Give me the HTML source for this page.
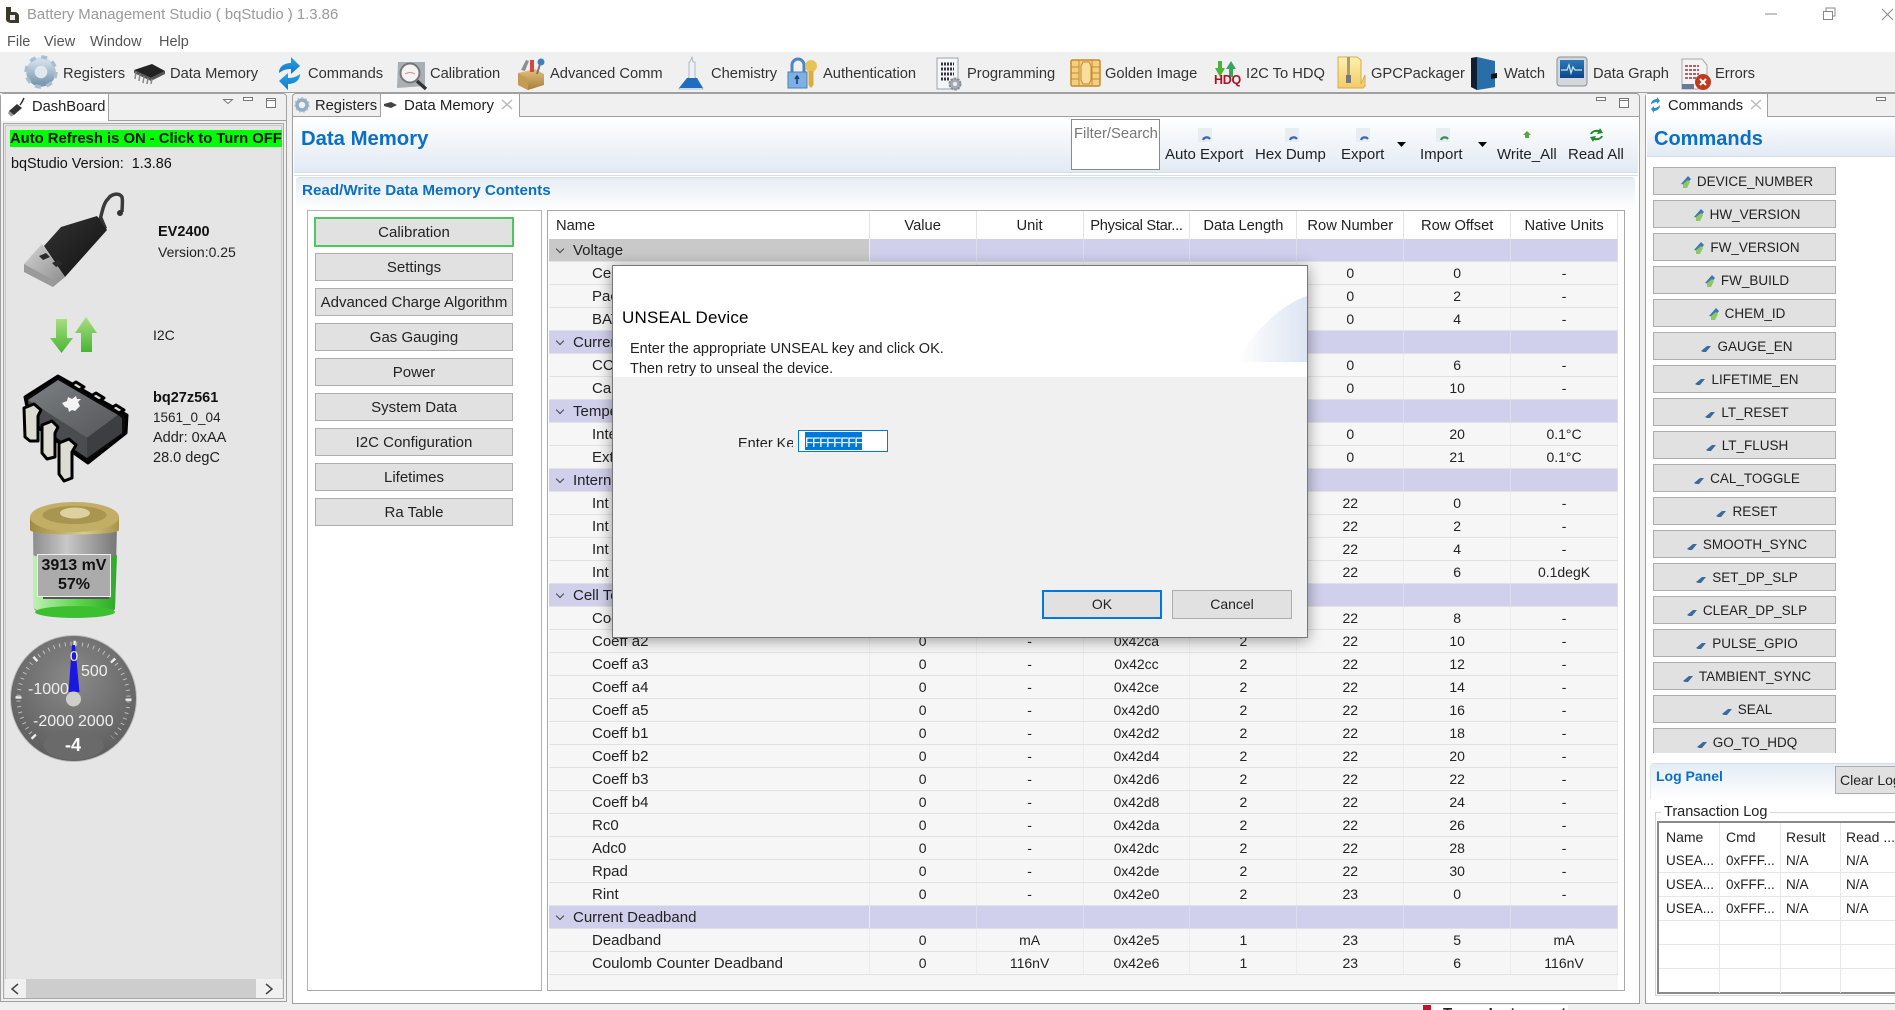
<!DOCTYPE html>
<html><head><meta charset="utf-8"><title>Battery Management Studio</title>
<style>
html,body{margin:0;padding:0;width:1895px;height:1010px;overflow:hidden;background:#f0f0f0;font-family:"Liberation Sans",sans-serif;font-size:14px;color:#222}
div,span{box-sizing:border-box}
.a{position:absolute}
.t{position:absolute;white-space:nowrap;line-height:20px;height:20px}
.tb{font-size:14.7px;color:#333;top:64px}
.ft{font-size:15px;top:145px}
.hb{color:#0b6fc5;font-weight:bold}
.btn{position:absolute;background:#e1e1e1;border:1px solid #adadad;text-align:center;color:#222;font-size:14px;white-space:nowrap;overflow:hidden}
.lb{left:315px;width:198px;height:28px;line-height:28px;font-size:15px}
.cb{left:1653px;width:183px;height:28px;line-height:28px;font-size:13.5px;padding-left:4px}
.cb svg{vertical-align:-3px;margin-right:5px}
.r{display:flex;height:23px;background:#f6f6f6;border-bottom:1px solid #e2e2e2;line-height:22px;font-size:14px;color:#222}
.r span{width:107px;text-align:center;border-right:1px solid #ececec;height:22px}
.r span:first-child{width:321px;text-align:left;padding-left:43px;border-right:1px solid #ececec;white-space:nowrap;overflow:hidden;font-size:15px;line-height:24px}
.g{background:#d0d0ec}
.g span{border-right:1px solid #dcdcf0}
.g span:first-child{padding-left:24px;position:relative}
.g span:first-child:before{content:"";position:absolute;left:8px;top:7px;width:5px;height:5px;border-right:1.4px solid #444;border-bottom:1.4px solid #444;transform:rotate(45deg)}
.h{display:flex;height:28px;line-height:31px;background:#fff;font-size:14.7px}
.h span{width:107px;text-align:center;border-right:1px solid #e4e4e4;height:28px;white-space:nowrap}
.h span:first-child{width:321px;text-align:left;padding-left:7px}
.lr{position:absolute;left:1659px;width:240px;height:24px;border-bottom:1px solid #e6e6e6;font-size:13.5px;line-height:24px;color:#222}
.lr b{font-weight:normal;position:absolute;top:0}
.lc{position:absolute;top:823px;height:170px;width:1px;background:#e8e8e8}
.d{font-size:14.5px}
.ds{font-size:16px;color:#eee}
</style></head><body>

<div class="a" style="left:0;top:0;width:1895px;height:52px;background:#fff"></div>
<div class="a" style="left:0;top:52px;width:1895px;height:41px;background:#f0f0f0;border-bottom:1px solid #a0a0a0"></div>

<div class="t" style="left:27px;top:5px;font-size:14.9px;color:#999">Battery Management Studio ( bqStudio ) 1.3.86</div>
<div class="t" style="left:7px;top:32px;font-size:14.5px;color:#555">File</div>
<div class="t" style="left:44px;top:32px;font-size:14.5px;color:#555">View</div>
<div class="t" style="left:90px;top:32px;font-size:14.5px;color:#555">Window</div>
<div class="t" style="left:159px;top:32px;font-size:14.5px;color:#555">Help</div>

<div class="t tb" style="left:63px">Registers</div>
<div class="t tb" style="left:170px">Data Memory</div>
<div class="t tb" style="left:308px">Commands</div>
<div class="t tb" style="left:430px">Calibration</div>
<div class="t tb" style="left:550px">Advanced Comm</div>
<div class="t tb" style="left:711px">Chemistry</div>
<div class="t tb" style="left:823px">Authentication</div>
<div class="t tb" style="left:967px">Programming</div>
<div class="t tb" style="left:1105px">Golden Image</div>
<div class="t tb" style="left:1246px">I2C To HDQ</div>
<div class="t tb" style="left:1371px">GPCPackager</div>
<div class="t tb" style="left:1504px">Watch</div>
<div class="t tb" style="left:1593px">Data Graph</div>
<div class="t tb" style="left:1715px">Errors</div>

<!-- Dashboard panel -->
<div class="a" style="left:0;top:93px;width:287px;height:909px;border:1px solid #a0a0a0;border-radius:4px 4px 0 0;background:#f0f0f0"></div>
<div class="a" style="left:1px;top:94px;width:108px;height:27px;background:#fff;border-right:1px solid #a0a0a0;border-bottom:0"></div>
<div class="a" style="left:109px;top:120px;width:177px;height:1px;background:#a0a0a0"></div>
<div class="t" style="left:32px;top:97px;font-size:14.7px;color:#222">DashBoard</div>
<div class="a" style="left:3px;top:123px;width:281px;height:876px;background:#e5e5e5;border:1px solid #a8a8a8;outline:1px solid #c8c8c8;outline-offset:-3px"></div>
<div class="a" style="left:10px;top:130px;width:272px;height:17px;background:#00ff00"></div>
<div class="t" style="left:10px;top:129px;font-size:14.8px;font-weight:bold;color:#111">Auto Refresh is ON - Click to Turn OFF</div>
<div class="t" style="left:11px;top:154px;font-size:14.4px;color:#111">bqStudio Version:&nbsp; 1.3.86</div>
<div class="t" style="left:158px;top:222px;font-size:14.5px;font-weight:bold;color:#111">EV2400</div>
<div class="t" style="left:158px;top:242px;font-size:14px;color:#222">Version:0.25</div>
<div class="t" style="left:153px;top:325px;font-size:14px;color:#222">I2C</div>
<div class="t" style="left:153px;top:388px;font-size:14.5px;font-weight:bold;color:#111">bq27z561</div>
<div class="t" style="left:153px;top:408px;font-size:13.5px;color:#222">1561_0_04</div>
<div class="t" style="left:153px;top:428px;font-size:14.5px;color:#222">Addr: 0xAA</div>
<div class="t" style="left:153px;top:448px;font-size:14.5px;color:#222">28.0 degC</div>
<div class="a" style="left:5px;top:979px;width:277px;height:19px;background:#f0f0f0"></div>
<div class="a" style="left:26px;top:979px;width:230px;height:19px;background:#cdcdcd"></div>

<!-- Data Memory panel -->
<div class="a" style="left:292px;top:93px;width:1348px;height:911px;border:1px solid #a0a0a0;border-radius:4px 4px 0 0;background:#f0f0f0"></div>
<div class="a" style="left:293px;top:116px;width:1346px;height:887px;background:#fff;border-top:1px solid #a0a0a0"></div>
<div class="a" style="left:380px;top:94px;width:140px;height:24px;background:#fff;border-left:1px solid #a0a0a0;border-right:1px solid #a0a0a0"></div>
<div class="t" style="left:315px;top:96px;font-size:14.7px">Registers</div>
<div class="t" style="left:404px;top:96px;font-size:15px">Data Memory</div>
<div class="a" style="left:294px;top:117px;width:1344px;height:55px;background:linear-gradient(#fff,#e2eaf3)"></div>
<div class="a" style="left:294px;top:172px;width:1344px;height:4px;border-top:1px solid #d4dde8;border-bottom:1px solid #d4dde8"></div>
<div class="t hb" style="left:301px;top:129px;font-size:20.3px">Data Memory</div>
<div class="a" style="left:296px;top:177px;width:1339px;height:34px;background:linear-gradient(#e6edf5,#fff);border-radius:4px 4px 0 0;border-top:1px solid #d5dee8"></div>
<div class="t hb" style="left:302px;top:181px;font-size:15.2px">Read/Write Data Memory Contents</div>

<div class="a" style="left:1071px;top:119px;width:89px;height:51px;background:#fff;border:1px solid #8a8a8a"></div>
<div class="t" style="left:1074px;top:124px;font-size:14.8px;color:#777">Filter/Search</div>
<div class="t ft" style="left:1165px">Auto Export</div>
<div class="t ft" style="left:1255px">Hex Dump</div>
<div class="t ft" style="left:1341px">Export</div>
<div class="t ft" style="left:1420px">Import</div>
<div class="t ft" style="left:1497px">Write_All</div>
<div class="t ft" style="left:1568px">Read All</div>

<!-- Left button list -->
<div class="a" style="left:307px;top:210px;width:235px;height:781px;border:1px solid #b4b4b4;border-bottom:1px solid #a8a8a8;background:#fff"></div>
<div class="btn lb" style="left:314px;width:200px;top:217px;height:30px;border:2px solid #4ec85a;line-height:28px">Calibration</div>
<div class="btn lb" style="top:253px">Settings</div>
<div class="btn lb" style="top:288px">Advanced Charge Algorithm</div>
<div class="btn lb" style="top:323px">Gas Gauging</div>
<div class="btn lb" style="top:358px">Power</div>
<div class="btn lb" style="top:393px">System Data</div>
<div class="btn lb" style="top:428px">I2C Configuration</div>
<div class="btn lb" style="top:463px">Lifetimes</div>
<div class="btn lb" style="top:498px">Ra Table</div>

<!-- Table -->
<div class="a" style="left:547px;top:210px;width:1078px;height:781px;border:1px solid #a8a8a8;background:#fff"></div>
<div class="a" style="left:549px;top:211px;width:1069px;height:779px;background:#f6f6f6;overflow:hidden">
<div class="h"><span>Name</span><span>Value</span><span>Unit</span><span style="letter-spacing:-.3px">Physical Star...</span><span>Data Length</span><span>Row Number</span><span>Row Offset</span><span>Native Units</span></div>
<div class="r g"><span style="background:#c9c9c9">Voltage</span><span></span><span></span><span></span><span></span><span></span><span></span><span></span></div>
<div class="r"><span>Cell Gain</span><span>0</span><span>-</span><span>0x4000</span><span>2</span><span>0</span><span>0</span><span>-</span></div>
<div class="r"><span>Pack Gain</span><span>0</span><span>-</span><span>0x4002</span><span>2</span><span>0</span><span>2</span><span>-</span></div>
<div class="r"><span>BAT Gain</span><span>0</span><span>-</span><span>0x4004</span><span>2</span><span>0</span><span>4</span><span>-</span></div>
<div class="r g"><span>Current</span><span></span><span></span><span></span><span></span><span></span><span></span><span></span></div>
<div class="r"><span>CC Gain</span><span>0</span><span>-</span><span>0x4006</span><span>4</span><span>0</span><span>6</span><span>-</span></div>
<div class="r"><span>Capacity Gain</span><span>0</span><span>-</span><span>0x400a</span><span>4</span><span>0</span><span>10</span><span>-</span></div>
<div class="r g"><span>Temperature</span><span></span><span></span><span></span><span></span><span></span><span></span><span></span></div>
<div class="r"><span>Internal Temp Offset</span><span>0</span><span>-</span><span>0x4014</span><span>1</span><span>0</span><span>20</span><span>0.1°C</span></div>
<div class="r"><span>External Temp Offset</span><span>0</span><span>-</span><span>0x4015</span><span>1</span><span>0</span><span>21</span><span>0.1°C</span></div>
<div class="r g"><span>Internal Temp Model</span><span></span><span></span><span></span><span></span><span></span><span></span><span></span></div>
<div class="r"><span>Int Coeff 1</span><span>0</span><span>-</span><span>0x42c0</span><span>2</span><span>22</span><span>0</span><span>-</span></div>
<div class="r"><span>Int Coeff 2</span><span>0</span><span>-</span><span>0x42c2</span><span>2</span><span>22</span><span>2</span><span>-</span></div>
<div class="r"><span>Int Coeff 3</span><span>0</span><span>-</span><span>0x42c4</span><span>2</span><span>22</span><span>4</span><span>-</span></div>
<div class="r"><span>Int Coeff 4</span><span>0</span><span>-</span><span>0x42c6</span><span>2</span><span>22</span><span>6</span><span>0.1degK</span></div>
<div class="r g"><span>Cell Temperature Model</span><span></span><span></span><span></span><span></span><span></span><span></span><span></span></div>
<div class="r"><span>Coeff a1</span><span>0</span><span>-</span><span>0x42c8</span><span>2</span><span>22</span><span>8</span><span>-</span></div>
<div class="r"><span>Coeff a2</span><span>0</span><span>-</span><span>0x42ca</span><span>2</span><span>22</span><span>10</span><span>-</span></div>
<div class="r"><span>Coeff a3</span><span>0</span><span>-</span><span>0x42cc</span><span>2</span><span>22</span><span>12</span><span>-</span></div>
<div class="r"><span>Coeff a4</span><span>0</span><span>-</span><span>0x42ce</span><span>2</span><span>22</span><span>14</span><span>-</span></div>
<div class="r"><span>Coeff a5</span><span>0</span><span>-</span><span>0x42d0</span><span>2</span><span>22</span><span>16</span><span>-</span></div>
<div class="r"><span>Coeff b1</span><span>0</span><span>-</span><span>0x42d2</span><span>2</span><span>22</span><span>18</span><span>-</span></div>
<div class="r"><span>Coeff b2</span><span>0</span><span>-</span><span>0x42d4</span><span>2</span><span>22</span><span>20</span><span>-</span></div>
<div class="r"><span>Coeff b3</span><span>0</span><span>-</span><span>0x42d6</span><span>2</span><span>22</span><span>22</span><span>-</span></div>
<div class="r"><span>Coeff b4</span><span>0</span><span>-</span><span>0x42d8</span><span>2</span><span>22</span><span>24</span><span>-</span></div>
<div class="r"><span>Rc0</span><span>0</span><span>-</span><span>0x42da</span><span>2</span><span>22</span><span>26</span><span>-</span></div>
<div class="r"><span>Adc0</span><span>0</span><span>-</span><span>0x42dc</span><span>2</span><span>22</span><span>28</span><span>-</span></div>
<div class="r"><span>Rpad</span><span>0</span><span>-</span><span>0x42de</span><span>2</span><span>22</span><span>30</span><span>-</span></div>
<div class="r"><span>Rint</span><span>0</span><span>-</span><span>0x42e0</span><span>2</span><span>23</span><span>0</span><span>-</span></div>
<div class="r g"><span>Current Deadband</span><span></span><span></span><span></span><span></span><span></span><span></span><span></span></div>
<div class="r"><span>Deadband</span><span>0</span><span>mA</span><span>0x42e5</span><span>1</span><span>23</span><span>5</span><span>mA</span></div>
<div class="r"><span>Coulomb Counter Deadband</span><span>0</span><span>116nV</span><span>0x42e6</span><span>1</span><span>23</span><span>6</span><span>116nV</span></div>
</div>

<!-- Commands panel -->
<div class="a" style="left:1645px;top:93px;width:260px;height:911px;border:1px solid #a0a0a0;border-radius:4px 0 0 0;background:#f0f0f0"></div>
<div class="a" style="left:1646px;top:116px;width:250px;height:887px;background:#fff;border-top:1px solid #a0a0a0"></div>
<div class="a" style="left:1646px;top:94px;width:122px;height:24px;background:#fff;border-right:1px solid #a0a0a0"></div>
<div class="t" style="left:1668px;top:96px;font-size:14.7px">Commands</div>
<div class="a" style="left:1647px;top:117px;width:248px;height:40px;background:linear-gradient(#fff,#e2eaf3);border-bottom:1px solid #d4dde8"></div>
<div class="t hb" style="left:1654px;top:129px;font-size:20px">Commands</div>

<div class="btn cb" style="top:167px"><svg width="12" height="14"><path d="M1 9L8 1l3 3-5 6z" fill="#3e78b0"/><path d="M3 9l5-4 2 2-3 6H3z" fill="#8fc863"/></svg>DEVICE_NUMBER</div>
<div class="btn cb" style="top:200px"><svg width="12" height="14"><path d="M1 9L8 1l3 3-5 6z" fill="#3e78b0"/><path d="M3 9l5-4 2 2-3 6H3z" fill="#8fc863"/></svg>HW_VERSION</div>
<div class="btn cb" style="top:233px"><svg width="12" height="14"><path d="M1 9L8 1l3 3-5 6z" fill="#3e78b0"/><path d="M3 9l5-4 2 2-3 6H3z" fill="#8fc863"/></svg>FW_VERSION</div>
<div class="btn cb" style="top:266px"><svg width="12" height="14"><path d="M1 9L8 1l3 3-5 6z" fill="#3e78b0"/><path d="M3 9l5-4 2 2-3 6H3z" fill="#8fc863"/></svg>FW_BUILD</div>
<div class="btn cb" style="top:299px"><svg width="12" height="14"><path d="M1 9L8 1l3 3-5 6z" fill="#3e78b0"/><path d="M3 9l5-4 2 2-3 6H3z" fill="#8fc863"/></svg>CHEM_ID</div>
<div class="btn cb" style="top:332px"><svg width="12" height="10"><path d="M1 7L7 2h4L6 8H3z" fill="#3b6a9c"/></svg>GAUGE_EN</div>
<div class="btn cb" style="top:365px"><svg width="12" height="10"><path d="M1 7L7 2h4L6 8H3z" fill="#3b6a9c"/></svg>LIFETIME_EN</div>
<div class="btn cb" style="top:398px"><svg width="12" height="10"><path d="M1 7L7 2h4L6 8H3z" fill="#3b6a9c"/></svg>LT_RESET</div>
<div class="btn cb" style="top:431px"><svg width="12" height="10"><path d="M1 7L7 2h4L6 8H3z" fill="#3b6a9c"/></svg>LT_FLUSH</div>
<div class="btn cb" style="top:464px"><svg width="12" height="10"><path d="M1 7L7 2h4L6 8H3z" fill="#3b6a9c"/></svg>CAL_TOGGLE</div>
<div class="btn cb" style="top:497px"><svg width="12" height="10"><path d="M1 7L7 2h4L6 8H3z" fill="#3b6a9c"/></svg>RESET</div>
<div class="btn cb" style="top:530px"><svg width="12" height="10"><path d="M1 7L7 2h4L6 8H3z" fill="#3b6a9c"/></svg>SMOOTH_SYNC</div>
<div class="btn cb" style="top:563px"><svg width="12" height="10"><path d="M1 7L7 2h4L6 8H3z" fill="#3b6a9c"/></svg>SET_DP_SLP</div>
<div class="btn cb" style="top:596px"><svg width="12" height="10"><path d="M1 7L7 2h4L6 8H3z" fill="#3b6a9c"/></svg>CLEAR_DP_SLP</div>
<div class="btn cb" style="top:629px"><svg width="12" height="10"><path d="M1 7L7 2h4L6 8H3z" fill="#3b6a9c"/></svg>PULSE_GPIO</div>
<div class="btn cb" style="top:662px"><svg width="12" height="10"><path d="M1 7L7 2h4L6 8H3z" fill="#3b6a9c"/></svg>TAMBIENT_SYNC</div>
<div class="btn cb" style="top:695px"><svg width="12" height="10"><path d="M1 7L7 2h4L6 8H3z" fill="#3b6a9c"/></svg>SEAL</div>
<div class="btn cb" style="top:728px;height:25px;border-bottom:0"><svg width="12" height="10"><path d="M1 7L7 2h4L6 8H3z" fill="#3b6a9c"/></svg>GO_TO_HDQ</div>

<!-- Log panel -->
<div class="a" style="left:1650px;top:763px;width:245px;height:36px;background:linear-gradient(#e4ecf5,#fff);border-top:1px solid #d5dee8;border-left:1px solid #e2e8f0;border-radius:4px 0 0 0"></div>
<div class="t hb" style="left:1656px;top:766px;font-size:14px">Log Panel</div>
<div class="a" style="left:1835px;top:766px;width:70px;height:28px;background:#e1e1e1;border:1px solid #adadad;line-height:26px;padding-left:4px;white-space:nowrap;overflow:hidden">Clear Log</div>
<div class="a" style="left:1655px;top:812px;width:240px;height:184px;border:1px solid #d8d8d8;border-right:0"></div>
<div class="t" style="left:1661px;top:802px;padding:0 3px;background:#fff;font-size:14.5px">Transaction Log</div>
<div class="a" style="left:1657px;top:821px;width:238px;height:173px;border:2px solid #8a8a8a;border-right:0;background:#fff"></div>
<div class="lc" style="left:1719px"></div><div class="lc" style="left:1780px"></div><div class="lc" style="left:1840px"></div>
<div class="t" style="left:1666px;top:827px">Name</div><div class="t" style="left:1726px;top:827px">Cmd</div><div class="t" style="left:1786px;top:827px">Result</div><div class="t" style="left:1846px;top:827px">Read ...</div>
<div class="lr" style="top:849px"><b style="left:7px">USEA...</b><b style="left:67px">0xFFF...</b><b style="left:127px">N/A</b><b style="left:187px">N/A</b></div>
<div class="lr" style="top:873px"><b style="left:7px">USEA...</b><b style="left:67px">0xFFF...</b><b style="left:127px">N/A</b><b style="left:187px">N/A</b></div>
<div class="lr" style="top:897px"><b style="left:7px">USEA...</b><b style="left:67px">0xFFF...</b><b style="left:127px">N/A</b><b style="left:187px">N/A</b></div>
<div class="lr" style="top:921px"></div>
<div class="lr" style="top:945px"></div>

<!-- bottom TI logo -->
<div class="a" style="left:1423px;top:1005px;width:145px;height:5px;background:#fff;overflow:hidden">
<div class="a" style="left:0;top:0;width:8px;height:5px;background:#c8102e"></div>
<div class="t" style="left:20px;top:-1px;font-weight:bold;font-size:15px;color:#222">Texas Instruments</div>
</div>

<!-- icon layer -->
<svg class="a" style="left:0;top:0" width="1895" height="1010" viewBox="0 0 1895 1010">
<defs>
<linearGradient id="gb" x1="0" y1="0" x2="0" y2="1"><stop offset="0" stop-color="#cfdde9"/><stop offset="1" stop-color="#7e9ab3"/></linearGradient>
<linearGradient id="ar" x1="0" y1="0" x2="0" y2="1"><stop offset="0" stop-color="#25a5e8"/><stop offset="1" stop-color="#1673c8"/></linearGradient>
<linearGradient id="gr" x1="0" y1="0" x2="0" y2="1"><stop offset="0" stop-color="#a8dd80"/><stop offset="1" stop-color="#48b534"/></linearGradient>
<linearGradient id="gold" x1="0" y1="0" x2="1" y2="0"><stop offset="0" stop-color="#a08a3e"/><stop offset=".6" stop-color="#d8cb8c"/><stop offset="1" stop-color="#a8934a"/></linearGradient>
<linearGradient id="gbody" x1="0" y1="0" x2="1" y2="0"><stop offset="0" stop-color="#8d8d8d"/><stop offset=".4" stop-color="#c8c8c8"/><stop offset="1" stop-color="#777"/></linearGradient>
<linearGradient id="ggreen" x1="0" y1="0" x2="1" y2="0"><stop offset="0" stop-color="#bff0b4"/><stop offset=".6" stop-color="#55d045"/><stop offset="1" stop-color="#2ea82a"/></linearGradient>
<radialGradient id="gg" cx=".5" cy=".35" r=".7"><stop offset="0" stop-color="#8a8a8a"/><stop offset="1" stop-color="#5a5a5a"/></radialGradient>
<linearGradient id="tan" x1="0" y1="0" x2="0" y2="1"><stop offset="0" stop-color="#e4c17c"/><stop offset="1" stop-color="#a67c3a"/></linearGradient>
<linearGradient id="yel" x1="0" y1="0" x2="0" y2="1"><stop offset="0" stop-color="#fff0b0"/><stop offset="1" stop-color="#f2cc66"/></linearGradient>
<linearGradient id="blk" x1="0" y1="0" x2="1" y2="1"><stop offset="0" stop-color="#333"/><stop offset="1" stop-color="#111"/></linearGradient>
<linearGradient id="mon" x1="0" y1="0" x2="0" y2="1"><stop offset="0" stop-color="#2f78b8"/><stop offset="1" stop-color="#0d4588"/></linearGradient>
<linearGradient id="top" x1="0" y1="0" x2="1" y2="1"><stop offset="0" stop-color="#7c7f83"/><stop offset="1" stop-color="#555759"/></linearGradient>
<linearGradient id="blu" x1="0" y1="0" x2="1" y2="0"><stop offset="0" stop-color="#fff"/><stop offset="1" stop-color="#dde5f2"/></linearGradient>
<linearGradient id="sil" x1="0" y1="0" x2="1" y2="1"><stop offset="0" stop-color="#d4d4d4"/><stop offset="1" stop-color="#8a8a8a"/></linearGradient>
</defs>

<!-- title icon -->
<path d="M6 7h5v5h4c2 0 4 2 4 4v7h-7c-3 0-6-1-6-4z" fill="#3a3a2a"/><path d="M10 15h5v5h-5z" fill="#e8e8e8"/>
<!-- window controls -->
<path d="M1765 14h12" stroke="#888" fill="none"/>
<path d="M1823.500 11.500h9v8h-9zM1826 11v-3h9v8h-2" stroke="#888" fill="none"/>
<path d="M1882 9l11 11M1893 9l-11 11" stroke="#888" fill="none"/>

<!-- gear -->
<circle cx="41" cy="72" r="10.500" fill="none" stroke="url(#gb)" stroke-width="8.500"/>
<circle cx="41" cy="72" r="15" fill="none" stroke="#a9bed0" stroke-width="3.500" stroke-dasharray="6 5.800"/>
<circle cx="41" cy="72" r="6" fill="#dfe8ef"/>
<!-- chip -->
<path d="M134 70l18-6 13 7-14 7z" fill="#222"/><path d="M134 70l17 8 14-7v3l-14 7-17-8z" fill="#555"/>
<path d="M136 72l-1 7M140 74l-1 7M144 76l-1 7M148 78l-1 6M152 79l-1 5" stroke="#888" stroke-width="1.500"/>
<!-- commands arrows -->
<path d="M279 73c0-7 6-10 12-10v-6l9 9-9 8v-5c-5 0-8 1-12 4z" fill="url(#ar)"/>
<path d="M300 74c0 7-6 10-12 10v6l-9-9 9-8v5c5 0 8-1 12-4z" fill="url(#ar)"/>
<!-- calibration -->
<path d="M398 62h27v24l-28 2z" fill="#a8b0b5"/><circle cx="410" cy="73" r="9.500" fill="#f4f2f2" stroke="#777" stroke-width="2"/><path d="M405 74q5-3 10 0" stroke="#d78a8a" fill="none"/>
<path d="M417 81l9 8" stroke="#333" stroke-width="3.500"/>
<!-- toolbox -->
<path d="M518 73l17-4 9 5v11l-16 5-10-5z" fill="url(#tan)"/><path d="M518 73l10 6v11l-10-5z" fill="#c59a52"/>
<path d="M521 70l5-10 3 1-4 10z" fill="#8a8f96"/><path d="M530 60h4v12h-4z" fill="#d24a3a"/><circle cx="541" cy="62" r="3.500" fill="#3f7fbf"/><path d="M540 64l-3 10" stroke="#777" stroke-width="2"/>
<!-- flask -->
<path d="M689 62h1l2-5 1 5h2v15l8 12H679l10-12z" fill="#eef1f4" stroke="#a6adb3" stroke-width=".8"/>
<path d="M687 78h10l6 10h-24z" fill="#1f6cc0"/>
<!-- lock/key -->
<path d="M792 72v-7a6 6 0 0112 0v7" fill="none" stroke="#4d86c6" stroke-width="3"/>
<path d="M788 72h19v16h-19z" fill="#7fb0e4" stroke="#4d7fb8"/><path d="M797 84v-7m-2 2l2-3 2 3" stroke="#123e7a" stroke-width="1.500" fill="none"/>
<circle cx="811" cy="66" r="6" fill="#e6c35a"/><path d="M808.500 71h5v14l-2.500 3-2.500-3z" fill="#d9ae3f"/>
<!-- programming -->
<path d="M937 58h21v31h-21z" fill="#f4f6f8" stroke="#9aa5ad"/>
<path d="M941 64h13M941 69h13M941 74h13M941 79h8" stroke="#334" stroke-width="3" stroke-dasharray="2 1"/>
<circle cx="955" cy="84" r="5.500" fill="#a5acb3" stroke="#868d94" stroke-width="2" stroke-dasharray="2.500 1"/><circle cx="955" cy="84" r="2" fill="#f0f0f0"/>
<!-- golden image -->
<rect x="1071" y="60" width="29" height="26" rx="1.500" fill="#f2cf84" stroke="#c58c28" stroke-width="1.500"/>
<path d="M1071 67h8M1071 73h8M1071 79h8M1092 67h8M1092 73h8M1092 79h8M1079 60v26M1092 60v26" stroke="#c58c28" fill="none"/>
<path d="M1081 66l2-4h6l2 4v14l-2 4h-6l-2-4z" fill="#f8dca0" stroke="#c58c28"/>
<!-- HDQ -->
<path d="M1218 61h4v7h3l-5 9-5-9h3z" fill="#4ab53a"/><path d="M1231 61l5 8h-3v8h-4v-8h-3z" fill="#35a55f"/>

<!-- gpc -->
<g transform="translate(-3,-1)"><path d="M1341 58h19l4 3v24l4-9v11l-2 2h-25z" fill="url(#yel)" stroke="#d8ac48"/>
<path d="M1350 58h3v18h-3z" fill="#a79c7a"/><rect x="1349" y="76" width="5" height="8" fill="#777"/></g>
<!-- watch -->
<g transform="translate(-7,0)"><path d="M1478 58l6-1 18 4v26l-18 3-6-3z" fill="#2a6ea8"/><path d="M1478 58l6-1v33l-6-3z" fill="#111e32"/><path d="M1484 58l18 4v25l-18 3z" fill="#2a6ea8"/>
<path d="M1498 74l6-1v5l-6 1z" fill="#111"/></g>
<!-- data graph -->
<g transform="translate(-10,-1)"><rect x="1567" y="58" width="30" height="29" rx="3" fill="#d4d8dc" stroke="#8a9096"/><rect x="1570" y="61" width="24" height="18" fill="url(#mon)"/>
<path d="M1571 71h6l2-5 2 8 2-6 2 3h7" stroke="#bfe6f0" stroke-width="1.300" fill="none"/></g>
<!-- errors -->
<g transform="translate(-16,0)"><path d="M1698 59h20l5 6v24h-25z" fill="#f3f3f3" stroke="#a8a8a8"/>
<path d="M1701 66h14M1701 70h14M1701 74h14M1701 78h14" stroke="#b06070" stroke-width="2" stroke-dasharray="3 1"/>
<path d="M1698 84h12v5h-12z" fill="#647c94"/></g>
<circle cx="1703" cy="82" r="8" fill="#c03a20"/><path d="M1700 79l6 6M1706 79l-6 6" stroke="#fff" stroke-width="2"/>

<!-- dashboard tab & panel controls -->
<path d="M17 104l5 4-8 7-5-4z" fill="#333"/><path d="M9 111l5 4-3 1.500-3-3z" fill="#999"/><path d="M20 105l2-3 2-4" stroke="#333" stroke-width="1.500" fill="none"/>
<path d="M223.500 99.500h9l-4.500 4z" fill="#fff" stroke="#777"/>
<rect x="243.500" y="97.500" width="9" height="3" fill="#fff" stroke="#777"/>
<rect x="266.500" y="98.500" width="9" height="9" fill="#fff" stroke="#777"/><path d="M266 100.500h10" stroke="#777"/>
<rect x="1596.500" y="97.500" width="9" height="3" fill="#fff" stroke="#777"/>
<rect x="1619.500" y="98.500" width="9" height="9" fill="#fff" stroke="#777"/><path d="M1619 100.500h10" stroke="#777"/>
<rect x="1876.500" y="97.500" width="9" height="3" fill="#fff" stroke="#777"/>
<!-- tab icons -->
<circle cx="302" cy="105" r="5" fill="none" stroke="#94adc0" stroke-width="3.500"/><circle cx="302" cy="105" r="7" fill="none" stroke="#b0c3d2" stroke-width="1.500" stroke-dasharray="2 2"/>
<path d="M384 104l7-2 6 3-6 3-7-2z" fill="#444"/>
<path d="M502 100l10 9M512 100l-10 9" stroke="#bbb" stroke-width="1.500"/>
<path d="M1651 104c0-3 3-5 6-5v-2l3 4-3 3v-2c-2 0-3 1-6 2z" fill="#2a8ed0"/><path d="M1660 105c0 4-3 6-6 6v2l-3-4 3-3v2c2 0 4-1 6-3z" fill="#2a8ed0"/>
<path d="M1751 100l10 9M1761 100l-10 9" stroke="#bbb" stroke-width="1.500"/>
<!-- form toolbar small icons -->
<path d="M1198 128h14v14h-14z" fill="#e8edf2"/><path d="M1203 140a4 4 0 017-1" stroke="#3a66b0" stroke-width="2.200" fill="none"/>
<path d="M1285 128h14v14h-14z" fill="#e8edf2"/><path d="M1290 140a4 4 0 017-1" stroke="#3a66b0" stroke-width="2.200" fill="none"/>
<path d="M1356 128h14v14h-14z" fill="#e8edf2"/><path d="M1361 140a4 4 0 017-1" stroke="#3a66b0" stroke-width="2.200" fill="none"/>
<path d="M1436 128h14v14h-14z" fill="#e8edf2"/><path d="M1441 140a4 4 0 017-1" stroke="#3a8a5a" stroke-width="2.200" fill="none"/>
<path d="M1527 131l4 4h-2v3h-4v-3h-2z" fill="#57a83c"/>
<path d="M1590 134c1-3 5-5 9-4l1-2 3 5-6 1 1-2c-3-.500-5 0-6 2zM1603 136c-1 3-5 5-9 4l-1 2-3-5 6-1-1 2c3 .500 5 0 6-2z" fill="#1f8a28"/>
<path d="M1397 142h9l-4.500 5zM1478 142h9l-4.500 5z" fill="#000"/>

<!-- USB -->
<path d="M100 220c2-8 4-18 8-21 3-5 11-7 14-2 1 4 0 11 0 15" fill="none" stroke="#3a3a3a" stroke-width="3.500"/>
<circle cx="120" cy="213" r="3" fill="#333"/>
<path d="M90 222l12-6 5 12-12 6z" fill="#333"/>
<path d="M61 227l36-11 10 14-42 47-21-31z" fill="url(#blk)"/>
<path d="M42 244l-18 20v8l29 15 12-10z" fill="url(#sil)"/>
<path d="M24 264l29 16v7l-29-15z" fill="#9a9a9a"/>
<path d="M39 256l7-3 4 4-7 3zM52 263l7-3 4 4-7 3z" fill="#2a2a2a"/>
<!-- arrows -->
<path d="M56 319h11v19h6l-11.500 15-11.500-15h6z" fill="url(#gr)"/>
<path d="M86 317l11 16h-5v19h-11v-19h-6z" fill="url(#gr)"/>
<!-- chip large -->
<path d="M25 397l33-21 69 39-1 18-38 30-58-41z" fill="#0a0a0a" stroke="#000" stroke-width="3" stroke-linejoin="round"/>
<path d="M28 400l30-20 60 35-31 23z" fill="url(#top)"/>
<path d="M28 400l59 38v20l-57-38z" fill="#4a4c4f"/>
<path d="M87 438l31-23 4 3v15l-35 25z" fill="#3c3e41"/>
<path d="M62 403l5-2 1-4 4 2 4-3 1 3 4 0-3 3 2 4-5 5-3-1-3 2-1-4-3-1z" fill="#f4f4f4"/>
<g stroke="#000" stroke-width="3" stroke-linejoin="round" fill="#dcdcd2">
<path d="M24 408l10-4 7 6-3 6v25h-8l-5-4z"/>
<path d="M42 425l10-4 6 6-3 6v24l-8 2-5-6z"/>
<path d="M59 443l10-4 7 6-4 7v26l-8 3-5-7z"/>
<path d="M71 385l5-3 8 5-5 3zM91 396l5-3 8 5-5 3zM111 408l5-3 8 5-5 3z"/>
</g>
<!-- battery -->
<path d="M33 525h84l-2 84c-2 7-78 7-81 0z" fill="url(#gbody)"/>
<path d="M33 555c10 5 74 5 84 0l-2 52c-2 10-78 10-82 0z" fill="url(#ggreen)"/>
<ellipse cx="75" cy="612" rx="40" ry="6" fill="#3cc030"/>
<path d="M30 517v13c0 6 89 6 89 0v-13z" fill="url(#gold)"/>
<ellipse cx="74.500" cy="517" rx="44.500" ry="15" fill="#c2ae65"/>
<ellipse cx="74.500" cy="515" rx="32" ry="9" fill="#a89550"/>
<ellipse cx="75" cy="513" rx="15" ry="5.500" fill="#ddd1a0"/>
<rect x="43" y="594" width="66" height="5" fill="#555"/>
<rect x="37.500" y="554.500" width="73" height="42" fill="#ababab" stroke="#eee"/>
<!-- gauge -->
<circle cx="73.500" cy="698.500" r="63" fill="url(#gg)" stroke="#bdbdbd"/>
<ellipse cx="73.500" cy="745" rx="30" ry="15" fill="#6a6a6a"/>
<g transform="translate(73.500,698.500)" fill="none" stroke="#eee">
<path d="M-39 39A55 55 0 1 1 39 39" pathLength="270" stroke-width="4" stroke-dasharray="1 5" opacity=".65"/>
<path d="M-39 39A55 55 0 1 1 39 39" pathLength="270" stroke-width="6" stroke-dasharray="2.500 42.500"/>
</g>
<path d="M72 645h3l4.500 47h-11z" fill="#1a18e0"/>
<ellipse cx="73.500" cy="699" rx="7.500" ry="7.500" fill="#cfcfc8"/>
</svg>

<div class="t" style="left:37px;top:556px;width:74px;text-align:center;font-weight:bold;font-size:16px;color:#111">3913 mV</div>
<div class="t" style="left:37px;top:575px;width:74px;text-align:center;font-weight:bold;font-size:16px;color:#111">57%</div>
<div class="t" style="left:64px;top:647px;width:20px;text-align:center;font-size:15px;color:#e8e8e8">0</div>
<div class="t ds" style="left:81px;top:662px">500</div>
<div class="t ds" style="left:28px;top:680px">-1000</div>
<div class="t ds" style="left:33px;top:712px">-2000</div>
<div class="t ds" style="left:78px;top:712px">2000</div>
<div class="t" style="left:65px;top:735px;font-size:18px;font-weight:bold;color:#fff">-4</div>
<div class="t" style="left:1214px;top:68px;font-size:12.500px;font-weight:bold;color:#b01020;line-height:24px;height:24px;letter-spacing:-.3px">HDQ</div>

<!-- chevrons / scroll arrows -->
<svg class="a" style="left:0;top:979px" width="287" height="19"><path d="M18 5l-6 5 6 5M266 5l6 5-6 5" fill="none" stroke="#444" stroke-width="1.500"/></svg>

<!-- Dialog -->
<div class="a" style="left:612px;top:265px;width:696px;height:373px;background:#f0f0f0;border:1px solid #777;box-shadow:0 2px 14px rgba(0,0,0,.4);overflow:hidden">
<div class="a" style="left:0;top:0;width:694px;height:111px;background:#fff;overflow:hidden">
<svg class="a" style="left:624px;top:30px" width="70" height="66"><path d="M0 66C14 40 40 10 70 0V66z" fill="url(#blu)"/></svg>
</div>
<div class="t" style="left:9px;top:42px;font-size:17px;letter-spacing:.2px;color:#000">UNSEAL Device</div>
<div class="t d" style="left:17px;top:73px;color:#222">Enter the appropriate UNSEAL key and click OK.</div>
<div class="t d" style="left:17px;top:93px;color:#222">Then retry to unseal the device.</div>
<div class="a d" style="left:125px;top:165px;width:55px;height:16px;overflow:hidden;line-height:27px;white-space:nowrap;color:#222">Enter Key</div>
<div class="a" style="left:185px;top:164px;width:90px;height:22px;background:#fff;border:1px solid #0078d7"></div>
<div class="a" style="left:192px;top:166px;width:57px;height:18px;background:#0078d7;color:#fff;font-size:13.5px;line-height:22px;overflow:hidden;letter-spacing:-1.200px;white-space:nowrap">FFFFFFFF</div>
<div class="a" style="left:429px;top:324px;width:120px;height:29px;background:#e1e1e1;border:2px solid #0078d7;text-align:center;line-height:25px">OK</div>
<div class="a" style="left:559px;top:324px;width:120px;height:29px;background:#e1e1e1;border:1px solid #adadad;text-align:center;line-height:27px">Cancel</div>
</div>
</body></html>
